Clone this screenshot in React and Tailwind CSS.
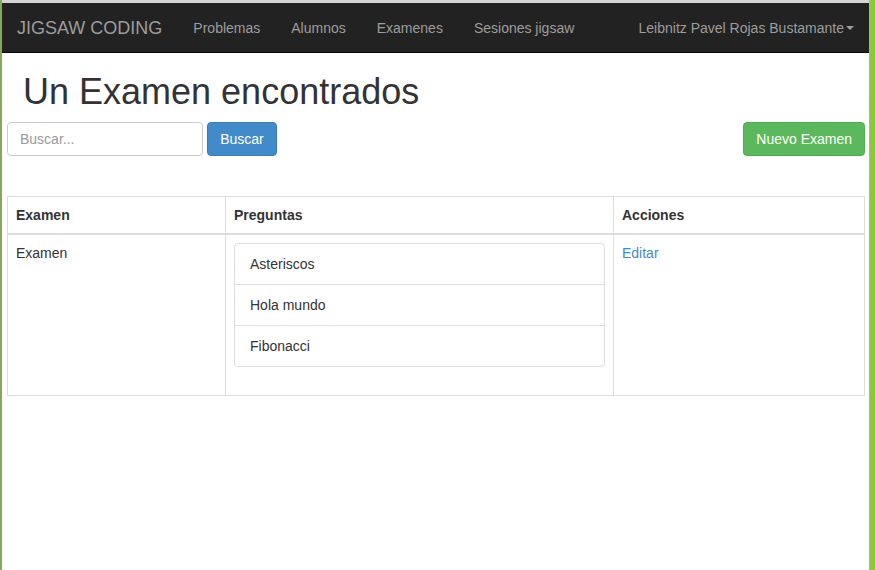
export default function App() {
  const font = { fontFamily: '"Liberation Sans", Arial, sans-serif' };
  return (
    <div className="w-[875px] h-[570px] flex bg-white overflow-hidden" style={font}>
      <div className="w-[2px] h-full bg-[#86a85a]" />
      <div className="flex-1 flex flex-col border-t-[3px] border-[#d4d4d4] min-w-0">
        <nav className="h-[50px] bg-[#222222] border-b border-[#080808] flex items-center text-[#9d9d9d]">
          <span className="px-[15px] text-[18px] leading-[20px]">JIGSAW CODING</span>
          <div className="flex text-[14px] leading-[20px]">
            <span className="pl-[16px] pr-[15px]">Problemas</span>
            <span className="pl-[16px] pr-[15px]">Alumnos</span>
            <span className="pl-[16px] pr-[15px]">Examenes</span>
            <span className="pl-[16px] pr-[15px]">Sesiones jigsaw</span>
          </div>
          <div className="ml-auto pr-[15px] text-[14px] leading-[20px] flex items-center">
            <span>Leibnitz Pavel Rojas Bustamante</span>
            <span className="ml-[2px] w-0 h-0 border-l-[4px] border-r-[4px] border-t-[4px] border-l-transparent border-r-transparent border-t-[#9d9d9d]" />
          </div>
        </nav>
        <div className="pl-[5px] pr-[4px] text-[#333333] text-[14px] leading-[20px]">
          <h1 className="ml-[16px] mt-[19px] text-[36px] leading-[40px] font-normal">Un Examen encontrados</h1>
          <div className="mt-[10px] flex items-center">
            <div className="w-[196px] h-[34px] border border-[#cccccc] rounded-[4px] px-[12px] flex items-center text-[#999999]">Buscar...</div>
            <button className="ml-[4px] h-[34px] w-[70px] bg-[#428bca] border border-[#357ebd] rounded-[4px] text-white">Buscar</button>
            <button className="ml-auto h-[34px] px-[12px] bg-[#5cb85c] border border-[#4cae4c] rounded-[4px] text-white">Nuevo Examen</button>
          </div>
          <table className="mt-[40px] w-full border-collapse border border-[#dddddd]">
            <thead>
              <tr>
                <th className="w-[218px] text-left font-bold p-[8px] border border-[#dddddd] border-b-2">Examen</th>
                <th className="w-[388px] text-left font-bold p-[8px] border border-[#dddddd] border-b-2">Preguntas</th>
                <th className="text-left font-bold p-[8px] border border-[#dddddd] border-b-2">Acciones</th>
              </tr>
            </thead>
            <tbody>
              <tr>
                <td className="align-top p-[8px] border border-[#dddddd]">Examen</td>
                <td className="align-top p-[8px] border border-[#dddddd]">
                  <div className="mb-[20px] border border-[#dddddd] rounded-[4px]">
                    <div className="px-[15px] py-[10px]">Asteriscos</div>
                    <div className="px-[15px] py-[10px] border-t border-[#dddddd]">Hola mundo</div>
                    <div className="px-[15px] py-[10px] border-t border-[#dddddd]">Fibonacci</div>
                  </div>
                </td>
                <td className="align-top p-[8px] border border-[#dddddd] text-[#428bca]">Editar</td>
              </tr>
            </tbody>
          </table>
        </div>
      </div>
      <div className="w-[1px] h-full bg-[#b0b0b0]" />
      <div className="w-[5px] h-full bg-[#8dc641]" />
    </div>
  );
}
